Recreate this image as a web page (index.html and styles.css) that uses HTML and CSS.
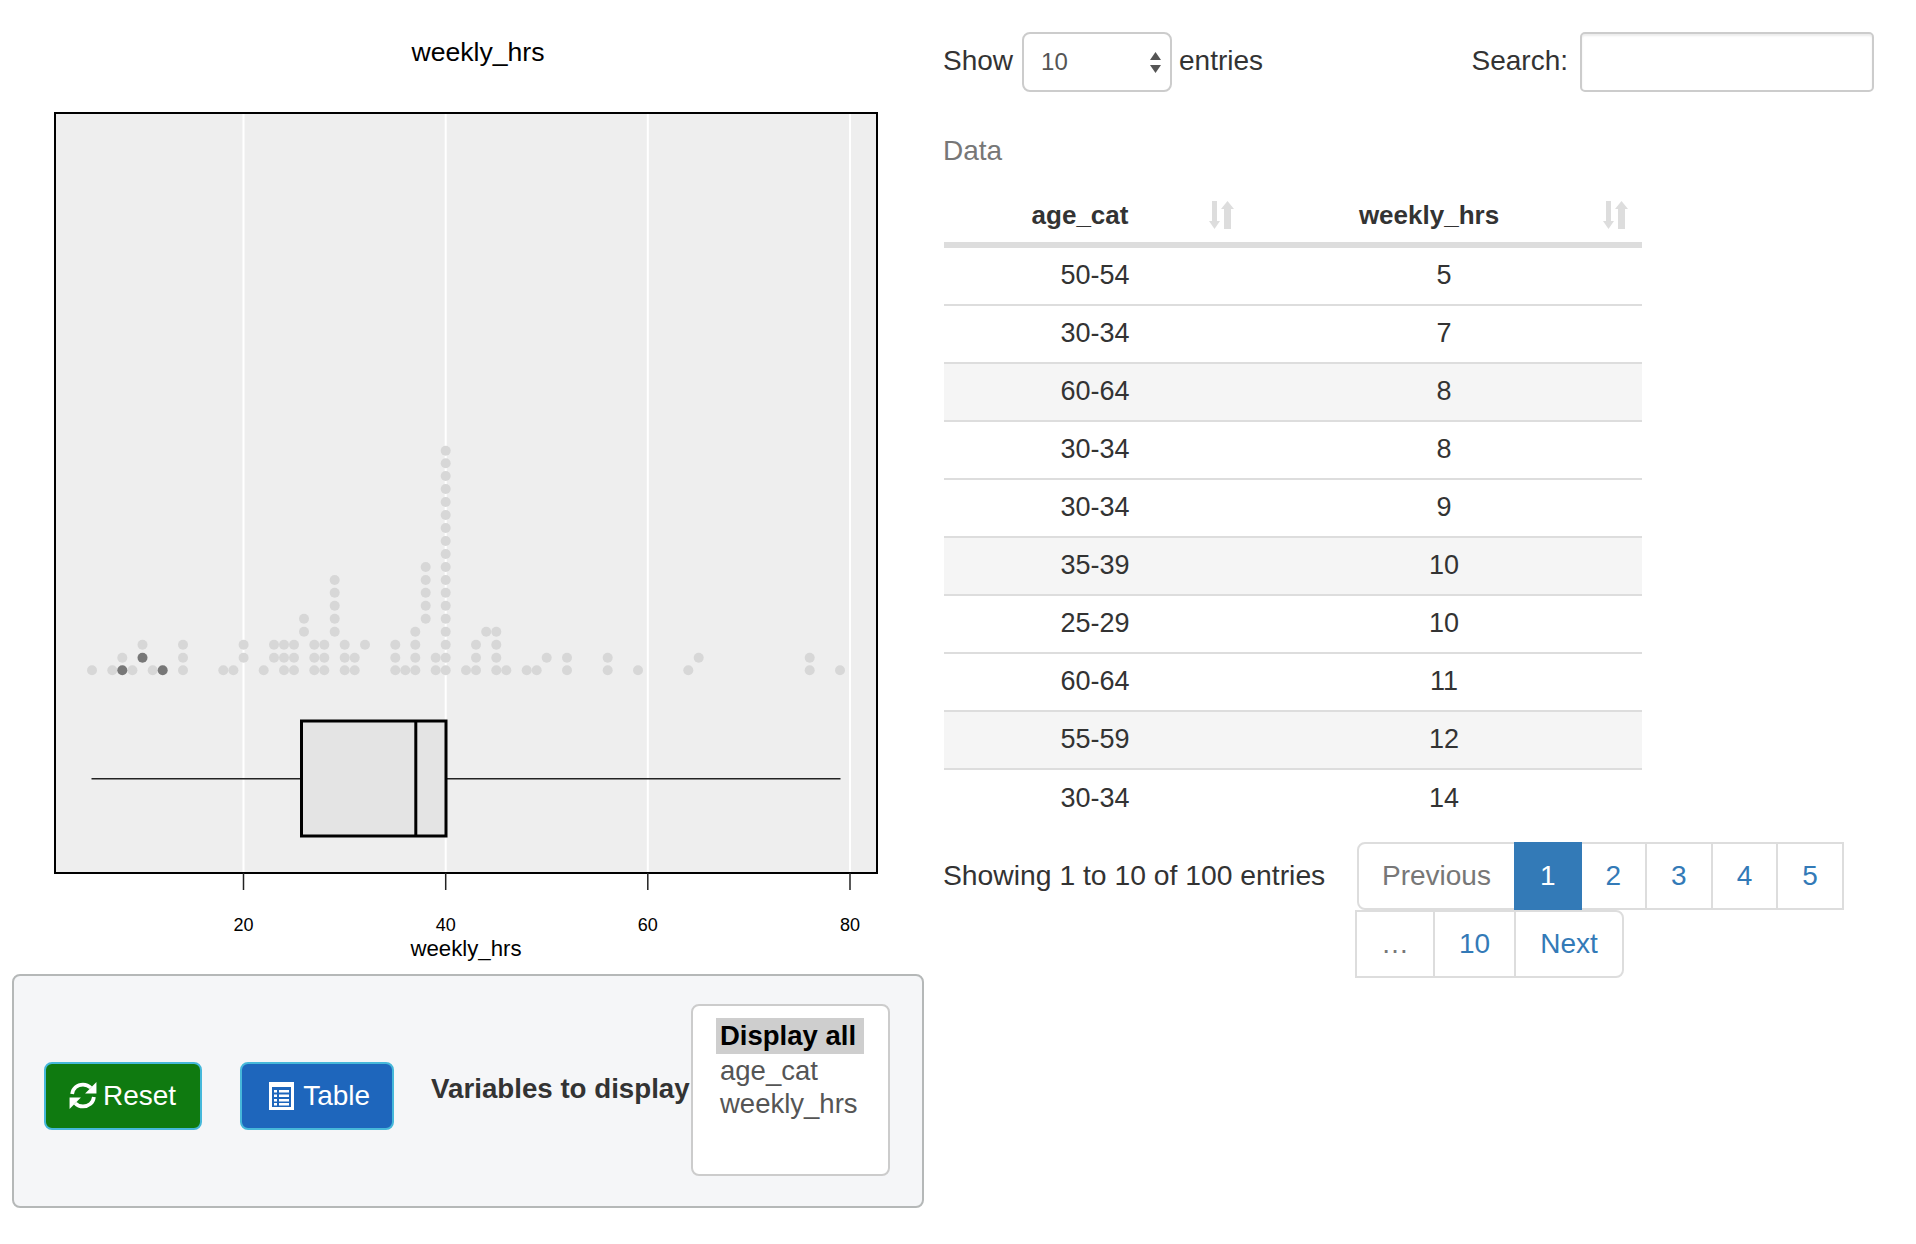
FILE: index.html
```html
<!DOCTYPE html>
<html lang="en">
<head>
<meta charset="utf-8">
<title>weekly_hrs</title>
<link rel="stylesheet" href="styles.css">
</head>
<body>
<div class="page">
  <section class="left">
    <svg class="chart" width="944" height="974" viewBox="0 0 944 974">
      <text class="chart-title" x="478" y="61" text-anchor="middle">weekly_hrs</text>
      <rect class="plot-bg" x="55" y="113" width="822" height="760"/>
      <g class="grid">
        <line x1="243.5" y1="114" x2="243.5" y2="872"/>
        <line x1="445.7" y1="114" x2="445.7" y2="872"/>
        <line x1="647.8" y1="114" x2="647.8" y2="872"/>
        <line x1="850" y1="114" x2="850" y2="872"/>
      </g>
      <g class="dots">
        <circle cx="92" cy="670.3" r="5"/>
        <circle cx="112.3" cy="670.3" r="5"/>
        <circle cx="122.3" cy="657.7" r="5"/>
        <circle cx="132.4" cy="670.3" r="5"/>
        <circle cx="142.5" cy="644.7" r="5"/>
        <circle cx="152.7" cy="670.3" r="5"/>
        <circle cx="183" cy="670.3" r="5"/><circle cx="183" cy="657.7" r="5"/><circle cx="183" cy="644.7" r="5"/>
        <circle cx="223.3" cy="670.3" r="5"/>
        <circle cx="233.4" cy="670.3" r="5"/>
        <circle cx="243.6" cy="657.7" r="5"/><circle cx="243.6" cy="644.7" r="5"/>
        <circle cx="263.7" cy="670.3" r="5"/>
        <circle cx="274" cy="657.7" r="5"/><circle cx="274" cy="644.7" r="5"/>
        <circle cx="284" cy="670.3" r="5"/><circle cx="284" cy="657.7" r="5"/><circle cx="284" cy="644.7" r="5"/>
        <circle cx="294" cy="670.3" r="5"/><circle cx="294" cy="657.7" r="5"/><circle cx="294" cy="644.7" r="5"/>
        <circle cx="304" cy="631.7" r="5"/><circle cx="304" cy="618.7" r="5"/>
        <circle cx="314.3" cy="670.3" r="5"/><circle cx="314.3" cy="657.7" r="5"/><circle cx="314.3" cy="644.7" r="5"/>
        <circle cx="324.3" cy="670.3" r="5"/><circle cx="324.3" cy="657.7" r="5"/><circle cx="324.3" cy="644.7" r="5"/>
        <circle cx="334.7" cy="631.7" r="5"/><circle cx="334.7" cy="618.7" r="5"/><circle cx="334.7" cy="605.7" r="5"/><circle cx="334.7" cy="592.7" r="5"/><circle cx="334.7" cy="580" r="5"/>
        <circle cx="344.7" cy="670.3" r="5"/><circle cx="344.7" cy="657.7" r="5"/><circle cx="344.7" cy="644.7" r="5"/>
        <circle cx="354.7" cy="670.3" r="5"/><circle cx="354.7" cy="657.7" r="5"/>
        <circle cx="365" cy="644.7" r="5"/>
        <circle cx="395.3" cy="670.3" r="5"/><circle cx="395.3" cy="657.7" r="5"/><circle cx="395.3" cy="644.7" r="5"/>
        <circle cx="405.3" cy="670.3" r="5"/>
        <circle cx="415.3" cy="670.3" r="5"/><circle cx="415.3" cy="657.7" r="5"/><circle cx="415.3" cy="644.7" r="5"/><circle cx="415.3" cy="631.7" r="5"/>
        <circle cx="425.7" cy="618.7" r="5"/><circle cx="425.7" cy="605.7" r="5"/><circle cx="425.7" cy="592.7" r="5"/><circle cx="425.7" cy="580" r="5"/><circle cx="425.7" cy="567" r="5"/>
        <circle cx="435.7" cy="670.3" r="5"/><circle cx="435.7" cy="657.7" r="5"/>
        <circle cx="445.7" cy="670.3" r="5"/><circle cx="445.7" cy="657.7" r="5"/><circle cx="445.7" cy="644.7" r="5"/><circle cx="445.7" cy="631.7" r="5"/><circle cx="445.7" cy="618.7" r="5"/><circle cx="445.7" cy="605.7" r="5"/><circle cx="445.7" cy="592.7" r="5"/><circle cx="445.7" cy="580" r="5"/><circle cx="445.7" cy="567" r="5"/><circle cx="445.7" cy="554" r="5"/><circle cx="445.7" cy="541" r="5"/><circle cx="445.7" cy="528" r="5"/><circle cx="445.7" cy="515" r="5"/><circle cx="445.7" cy="502" r="5"/><circle cx="445.7" cy="489" r="5"/><circle cx="445.7" cy="476" r="5"/><circle cx="445.7" cy="463.3" r="5"/><circle cx="445.7" cy="450.7" r="5"/>
        <circle cx="466" cy="670.3" r="5"/>
        <circle cx="476" cy="670.3" r="5"/><circle cx="476" cy="657.7" r="5"/><circle cx="476" cy="644.7" r="5"/>
        <circle cx="486.2" cy="631.7" r="5"/>
        <circle cx="496.3" cy="670.3" r="5"/><circle cx="496.3" cy="657.7" r="5"/><circle cx="496.3" cy="644.7" r="5"/><circle cx="496.3" cy="631.7" r="5"/>
        <circle cx="506.3" cy="670.3" r="5"/>
        <circle cx="526.7" cy="670.3" r="5"/>
        <circle cx="536.7" cy="670.3" r="5"/>
        <circle cx="546.7" cy="657.7" r="5"/>
        <circle cx="567" cy="670.3" r="5"/><circle cx="567" cy="657.7" r="5"/>
        <circle cx="607.7" cy="670.3" r="5"/><circle cx="607.7" cy="657.7" r="5"/>
        <circle cx="638" cy="670.3" r="5"/>
        <circle cx="688.3" cy="670.3" r="5"/>
        <circle cx="698.7" cy="657.7" r="5"/>
        <circle cx="809.7" cy="670.3" r="5"/><circle cx="809.7" cy="657.7" r="5"/>
        <circle cx="840" cy="670.3" r="5"/>
      </g>
      <g class="dots-dark">
        <circle cx="122.3" cy="670.3" r="5"/>
        <circle cx="142.5" cy="657.7" r="5"/>
        <circle cx="162.7" cy="670.3" r="5"/>
      </g>
      <line class="whisker" x1="91.5" y1="778.7" x2="301.5" y2="778.7"/>
      <line class="whisker" x1="446" y1="778.7" x2="840.5" y2="778.7"/>
      <rect class="box" x="301.5" y="721" width="144.5" height="115"/>
      <line class="median" x1="415.8" y1="721" x2="415.8" y2="836"/>
      <rect class="plot-frame" x="55" y="113" width="822" height="760"/>
      <g class="ticks">
        <line x1="243.5" y1="873" x2="243.5" y2="890"/>
        <line x1="445.7" y1="873" x2="445.7" y2="890"/>
        <line x1="647.8" y1="873" x2="647.8" y2="890"/>
        <line x1="850" y1="873" x2="850" y2="890"/>
      </g>
      <g class="tick-labels" text-anchor="middle">
        <text x="243.5" y="931">20</text>
        <text x="445.7" y="931">40</text>
        <text x="647.8" y="931">60</text>
        <text x="850" y="931">80</text>
      </g>
      <text class="axis-title" x="466" y="956" text-anchor="middle">weekly_hrs</text>
    </svg>
    <div class="panel">
      <button class="btn btn-reset" type="button">
        <svg class="btn-icon" width="28" height="29" viewBox="0 0 27 28">
          <path d="M3 12.5C3.6 7 8 3.4 13.5 3.4c3 0 5.6 1.2 7.5 3.2" fill="none" stroke="#fff" stroke-width="3.6"/>
          <path d="M26.5 1v11h-11z" fill="#fff"/>
          <path d="M24 15.5c-.6 5.5-5 9.1-10.5 9.1-3 0-5.6-1.2-7.5-3.2" fill="none" stroke="#fff" stroke-width="3.6"/>
          <path d="M.5 27V16h11z" fill="#fff"/>
        </svg>
        <span>Reset</span>
      </button>
      <button class="btn btn-table" type="button">
        <svg class="btn-icon" width="25" height="28" viewBox="0 0 25 28">
          <path fill-rule="evenodd" fill="#fff" d="M0 0h25v28H0zM3 5v20h19V5z"/>
          <path fill="#fff" d="M5 8h3v2.5H5zM10 8h10v2.5H10zM5 12.5h3V15H5zM10 12.5h10V15H10zM5 17h3v2.5H5zM10 17h10v2.5H10zM5 21h3v2.5H5zM10 21h10v2.5H10z"/>
        </svg>
        <span>Table</span>
      </button>
      <span class="var-label">Variables to display</span>
      <div class="var-list">
        <div class="var-option var-selected">Display all</div>
        <div class="var-option">age_cat</div>
        <div class="var-option">weekly_hrs</div>
      </div>
    </div>
  </section>

  <section class="right">
    <div class="controls">
      <div class="length">
        <span class="control-label">Show</span>
        <div class="fake-select">
          <span>10</span>
          <svg width="11" height="21" viewBox="0 0 11 21"><path fill="#555" d="M5.5 0L11 8H0zM0 13h11l-5.5 8z"/></svg>
        </div>
        <span class="control-label">entries</span>
      </div>
      <label class="search">
        <span class="control-label">Search:</span>
        <input class="search-input" type="text">
      </label>
    </div>
    <div class="caption">Data</div>
    <table class="data">
      <thead>
        <tr>
          <th class="col-a">age_cat
            <svg class="sort" width="26" height="28" viewBox="0 0 26 28"><path fill="#ddd" d="M3 0h5v20h3l-5.5 8L0 20h3z"/><path fill="#ddd" d="M15 28V8h-3l6.5-8L25 8h-3v20z"/></svg>
          </th>
          <th class="col-b">weekly_hrs
            <svg class="sort" width="26" height="28" viewBox="0 0 26 28"><path fill="#ddd" d="M3 0h5v20h3l-5.5 8L0 20h3z"/><path fill="#ddd" d="M15 28V8h-3l6.5-8L25 8h-3v20z"/></svg>
          </th>
        </tr>
      </thead>
      <tbody>
        <tr><td>50-54</td><td>5</td></tr>
        <tr><td>30-34</td><td>7</td></tr>
        <tr class="striped"><td>60-64</td><td>8</td></tr>
        <tr><td>30-34</td><td>8</td></tr>
        <tr><td>30-34</td><td>9</td></tr>
        <tr class="striped"><td>35-39</td><td>10</td></tr>
        <tr><td>25-29</td><td>10</td></tr>
        <tr><td>60-64</td><td>11</td></tr>
        <tr class="striped"><td>55-59</td><td>12</td></tr>
        <tr><td>30-34</td><td>14</td></tr>
      </tbody>
    </table>
    <div class="footer">
      <div class="info">Showing 1 to 10 of 100 entries</div>
      <ul class="pagination">
        <li><a class="page-link muted first">Previous</a></li>
        <li><a class="page-link current">1</a></li>
        <li><a class="page-link">2</a></li>
        <li><a class="page-link">3</a></li>
        <li><a class="page-link">4</a></li>
        <li><a class="page-link">5</a></li>
        <li><a class="page-link muted">…</a></li>
        <li><a class="page-link">10</a></li>
        <li><a class="page-link last">Next</a></li>
      </ul>
    </div>
  </section>
</div>
</body>
</html>
```
FILE: styles.css
```css
* { box-sizing: border-box; }
html, body { margin: 0; padding: 0; background: #fff; }
body {
  font-family: "Liberation Sans", Arial, sans-serif;
  font-size: 28px;
  line-height: 40px;
  color: #333;
}
.page { display: flex; width: 1916px; min-height: 1244px; }
.left { width: 944px; flex: none; }
.right { width: 930px; flex: none; }

/* chart */
.chart { display: block; }
.chart-title { font-size: 26.6px; fill: #000; }
.plot-bg { fill: #eeeeee; }
.grid line { stroke: #fff; stroke-width: 2; }
.dots circle { fill: #d7d7d7; }
.dots-dark circle { fill: #777; }
.whisker { stroke: #222; stroke-width: 1.5; }
.box { fill: #e4e4e4; stroke: #000; stroke-width: 3; }
.median { stroke: #000; stroke-width: 3; }
.plot-frame { fill: none; stroke: #000; stroke-width: 2; }
.ticks line { stroke: #222; stroke-width: 1.5; }
.tick-labels text { font-size: 18px; fill: #000; }
.axis-title { font-size: 22.2px; fill: #000; }

/* control panel */
.panel {
  display: flex;
  align-items: center;
  width: 912px;
  height: 234px;
  margin-left: 12px;
  padding: 0 32px 0 30px;
  background: #f5f6f8;
  border: 2px solid #b5b8b8;
  border-radius: 8px;
}
.btn {
  display: flex;
  flex: none;
  align-items: center;
  height: 68px;
  margin: 9px 38px 0 0;
  padding: 0 24px;
  color: #fff;
  font: inherit;
  border: 2px solid #46b8da;
  border-radius: 8px;
}
.btn-icon { margin-right: 9px; flex: none; }
.btn-reset { background: #0f7a10; padding-left: 23px; }
.btn-reset .btn-icon { margin-right: 6px; }
.btn-table { background: #1e66bc; padding-left: 27px; padding-right: 22px; margin-right: 37px; }
.var-label {
  flex: none;
  font-size: 27.7px;
  font-weight: bold;
  margin-bottom: 4px;
  white-space: nowrap;
}
.var-list {
  flex: none;
  width: 199px;
  height: 172px;
  margin: 0 0 2px auto;
  padding: 12px 0 0 23px;
  background: #fff;
  border: 2px solid #ccc;
  border-radius: 8px;
  color: #555;
  font-size: 27.5px;
}
.var-option {
  height: 33px;
  line-height: 33px;
  padding-left: 4px;
  white-space: nowrap;
}
.var-selected {
  width: 148px;
  height: 36px;
  line-height: 36px;
  background: #cecece;
  color: #000;
  font-weight: bold;
}

/* table controls */
.controls {
  display: flex;
  justify-content: space-between;
  align-items: center;
  height: 60px;
  margin-top: 32px;
}
.length, .search { display: flex; align-items: center; }
.length { margin-left: -1px; }
.control-label { padding-bottom: 2px; }
.fake-select {
  display: flex;
  align-items: center;
  justify-content: space-between;
  width: 150px;
  height: 60px;
  margin: 0 7px 0 9px;
  padding: 0 9px 0 17px;
  border: 2px solid #ccc;
  border-radius: 8px;
  color: #555;
  font-size: 24px;
}
.search-input {
  width: 294px;
  height: 60px;
  margin-left: 12px;
  border: 2px solid #ccc;
  border-radius: 5px;
  box-shadow: inset 0 2px 2px rgba(0, 0, 0, .075);
  background: #fff;
}
.caption {
  margin-top: 39px;
  margin-left: -1px;
  color: #777;
  height: 40px;
}

/* table */
.data {
  width: 698px;
  border-collapse: collapse;
  table-layout: fixed;
}
.data th {
  position: relative;
  height: 74px;
  padding: 22px 50px 6px 20px;
  font-size: 26px;
  font-weight: bold;
  text-align: center;
  border-bottom: 6px solid #ddd;
}
.col-a { width: 302px; }
.col-b { width: 396px; }
.sort { position: absolute; right: 11px; top: 30px; }
.col-b .sort { right: 13px; }
.data td {
  height: 58px;
  padding: 7px 20px 9px;
  text-align: center;
  font-size: 27px;
  border-bottom: 2px solid #ddd;
}
.data tbody tr:last-child td { border-bottom: 0; }
.striped td { background: #f5f5f5; }

/* footer */
.footer {
  display: flex;
  align-items: flex-start;
  margin-top: 15px;
}
.info {
  width: 414px;
  flex: none;
  margin-left: -1px;
  padding-top: 13px;
  font-size: 28.3px;
  white-space: nowrap;
}
.pagination {
  display: flex;
  flex-wrap: wrap;
  width: 500px;
  margin: 0;
  padding: 0;
  list-style: none;
}
.pagination li { display: block; }
.page-link {
  display: block;
  height: 68px;
  margin-left: -2px;
  padding: 12px 24px;
  color: #337ab7;
  background: #fff;
  border: 2px solid #ddd;
}
.first { margin-left: 0; padding: 12px 23px; border-radius: 8px 0 0 8px; }
.last { border-radius: 0 8px 8px 0; }
.muted { color: #777; }
.current { position: relative; color: #fff; background: #337ab7; border-color: #337ab7; }
```
